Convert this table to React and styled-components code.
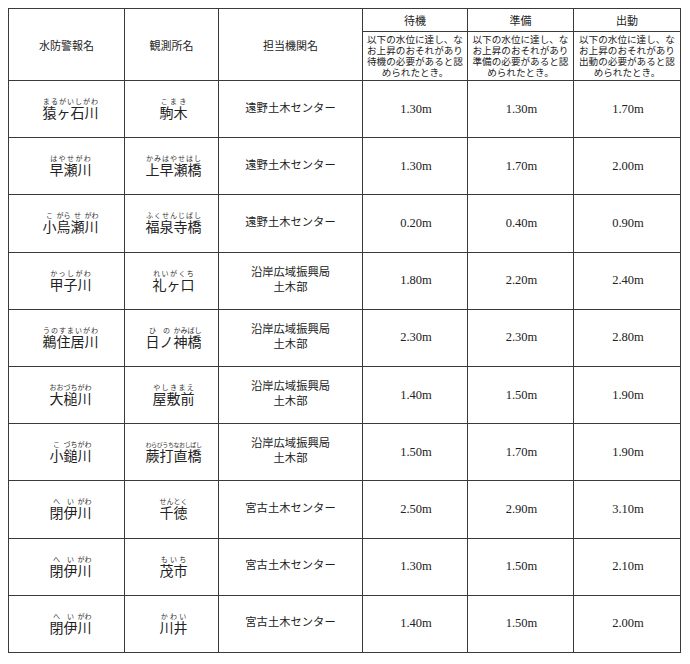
import styled, { createGlobalStyle } from "styled-components";

const GlobalStyle = createGlobalStyle`
  body {
    margin: 8px;
    background: #ffffff;
    font-family: "Noto Sans CJK JP", "Noto Sans", sans-serif;
    color: #222;
  }
`;

const Table = styled.table`
  width: 672px;
  border-collapse: collapse;
  table-layout: fixed;
`;

const Col = styled.col`
  width: ${({ $w }) => $w}px;
`;

const HeadRow = styled.tr`
  height: ${({ $h }) => $h}px;
`;

const HeadCell = styled.th`
  border: 1px solid #3a3a3a;
  font-weight: normal;
  font-size: 11px;
  line-height: 14px;
  text-align: center;
  vertical-align: middle;
  padding: 0;
`;

const NoteCell = styled.td`
  border: 1px solid #3a3a3a;
  font-size: 9.6px;
  line-height: 10.8px;
  text-align: center;
  vertical-align: middle;
  padding: 0 2px;
  word-break: break-all;
  overflow: hidden;
`;

const Row = styled.tr`
  height: 57.2px;
`;

const NameCell = styled.td`
  border: 1px solid #3a3a3a;
  text-align: center;
  vertical-align: middle;
  font-size: 14px;
  line-height: 18px;
  padding: 0 0 0 ${({ $shift }) => $shift || 0}px;
  ruby {
    ruby-align: space-around;
  }
`;

const Reading = styled.rt`
  font-size: ${({ $tight }) => ($tight ? 6 : 7)}px;
  letter-spacing: ${({ $tight }) => ($tight ? -0.4 : 0)}px;
  line-height: 1;
  color: #333;
`;

const AgencyCell = styled.td`
  border: 1px solid #3a3a3a;
  text-align: center;
  vertical-align: middle;
  font-size: 11.3px;
  line-height: 15px;
  padding: 0 0 4px;
`;

const AgencyLine = styled.div`
  white-space: nowrap;
`;

const LevelCell = styled.td`
  border: 1px solid #3a3a3a;
  text-align: center;
  vertical-align: middle;
  font-family: "Liberation Serif", "DejaVu Serif", serif;
  font-size: 12.5px;
  padding: 0 0 0 2px;
`;

const Ruby = ({ parts, tight }) => (
  <>
    {parts.map(([base, read], i) => (
      <ruby key={i}>
        {base}
        <Reading $tight={tight}>{read}</Reading>
      </ruby>
    ))}
  </>
);

const rows = [
  {
    river: [["猿ヶ石川", "まるがいしがわ"]],
    station: [["駒木", "こまき"]],
    agency: ["遠野土木センター"],
    levels: ["1.30m", "1.30m", "1.70m"],
  },
  {
    river: [["早瀬川", "はやせがわ"]],
    station: [["上早瀬橋", "かみはやせはし"]],
    agency: ["遠野土木センター"],
    levels: ["1.30m", "1.70m", "2.00m"],
  },
  {
    river: [["小", "こ"], ["烏", "がら"], ["瀬", "せ"], ["川", "がわ"]],
    station: [["福泉寺橋", "ふくせんじばし"]],
    agency: ["遠野土木センター"],
    levels: ["0.20m", "0.40m", "0.90m"],
  },
  {
    river: [["甲子川", "かっしがわ"]],
    station: [["礼ヶ口", "れいがくち"]],
    agency: ["沿岸広域振興局", "土木部"],
    levels: ["1.80m", "2.20m", "2.40m"],
  },
  {
    river: [["鵜住居川", "うのすまいがわ"]],
    station: [["日ノ", "ひの"], ["神橋", "かみばし"]],
    agency: ["沿岸広域振興局", "土木部"],
    levels: ["2.30m", "2.30m", "2.80m"],
  },
  {
    river: [["大槌", "おおづち"], ["川", "がわ"]],
    station: [["屋敷前", "やしきまえ"]],
    agency: ["沿岸広域振興局", "土木部"],
    levels: ["1.40m", "1.50m", "1.90m"],
  },
  {
    river: [["小", "こ"], ["鎚", "づち"], ["川", "がわ"]],
    station: [["蕨打直橋", "わらびうちなおしばし"]],
    tight: true,
    agency: ["沿岸広域振興局", "土木部"],
    levels: ["1.50m", "1.70m", "1.90m"],
  },
  {
    river: [["閉", "へ"], ["伊", "い"], ["川", "がわ"]],
    station: [["千徳", "せんとく"]],
    agency: ["宮古土木センター"],
    levels: ["2.50m", "2.90m", "3.10m"],
  },
  {
    river: [["閉", "へ"], ["伊", "い"], ["川", "がわ"]],
    station: [["茂市", "もいち"]],
    agency: ["宮古土木センター"],
    levels: ["1.30m", "1.50m", "2.10m"],
  },
  {
    river: [["閉", "へ"], ["伊", "い"], ["川", "がわ"]],
    station: [["川井", "かわい"]],
    agency: ["宮古土木センター"],
    levels: ["1.40m", "1.50m", "2.00m"],
  },
];

const stages = ["待機", "準備", "出動"];
const widths = [116, 94, 144, 105, 106, 107];

export default function App() {
  return (
    <>
      <GlobalStyle />
      <Table>
        <colgroup>
          {widths.map((w, i) => (
            <Col key={i} $w={w} />
          ))}
        </colgroup>
        <thead>
          <HeadRow $h={23}>
            <HeadCell rowSpan={2}>水防警報名</HeadCell>
            <HeadCell rowSpan={2}>観測所名</HeadCell>
            <HeadCell rowSpan={2}>担当機関名</HeadCell>
            {stages.map((s) => (
              <HeadCell key={s}>{s}</HeadCell>
            ))}
          </HeadRow>
          <HeadRow $h={49}>
            {stages.map((s) => (
              <NoteCell key={s}>
                以下の水位に達し、なお上昇のおそれがあり{s}の必要があると認められたとき。
              </NoteCell>
            ))}
          </HeadRow>
        </thead>
        <tbody>
          {rows.map((r, i) => (
            <Row key={i}>
              <NameCell $shift={8}>
                <Ruby parts={r.river} />
              </NameCell>
              <NameCell $shift={4}>
                <Ruby parts={r.station} tight={r.tight} />
              </NameCell>
              <AgencyCell>
                {r.agency.map((line, j) => (
                  <AgencyLine key={j}>{line}</AgencyLine>
                ))}
              </AgencyCell>
              {r.levels.map((v, j) => (
                <LevelCell key={j}>{v}</LevelCell>
              ))}
            </Row>
          ))}
        </tbody>
      </Table>
    </>
  );
}
